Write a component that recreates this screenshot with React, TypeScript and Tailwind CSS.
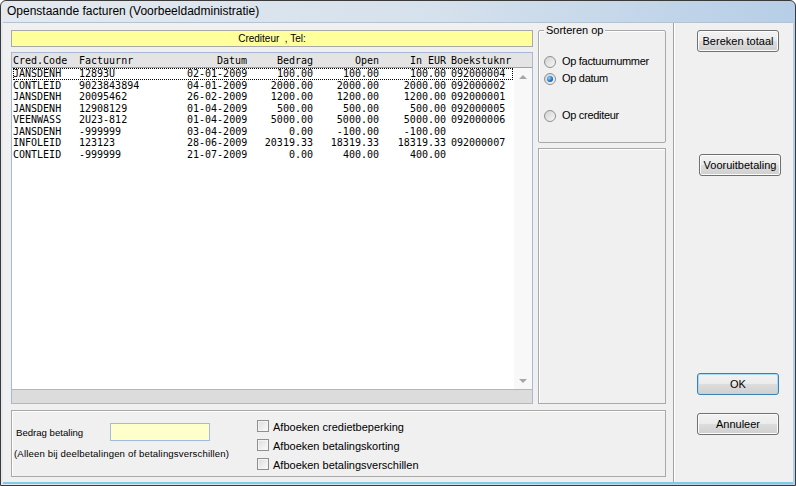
import React from "react";

const rows = [
  ["JANSDENH", "12893U", "02-01-2009", "100.00", "100.00", "100.00", "092000004"],
  ["CONTLEID", "9023843894", "04-01-2009", "2000.00", "2000.00", "2000.00", "092000002"],
  ["JANSDENH", "20095462", "26-02-2009", "1200.00", "1200.00", "1200.00", "092000001"],
  ["JANSDENH", "12908129", "01-04-2009", "500.00", "500.00", "500.00", "092000005"],
  ["VEENWASS", "2U23-812", "01-04-2009", "5000.00", "5000.00", "5000.00", "092000006"],
  ["JANSDENH", "-999999", "03-04-2009", "0.00", "-100.00", "-100.00", ""],
  ["INFOLEID", "123123", "28-06-2009", "20319.33", "18319.33", "18319.33", "092000007"],
  ["CONTLEID", "-999999", "21-07-2009", "0.00", "400.00", "400.00", ""],
];

const headers = ["Cred.Code", "Factuurnr", "Datum", "Bedrag", "Open", "In EUR", "Boekstuknr"];

const cols = "grid grid-cols-[66px_108px_60px_66px_66px_67px_65px]";
const align = ["", "", "text-right", "text-right", "text-right", "text-right", "pl-[5px]"];

const Button = ({ label, focused = false, className = "" }: { label: string; focused?: boolean; className?: string }) => (
  <div
    className={`flex h-[22px] w-[82px] items-center justify-center rounded-[3px] border text-[11px] leading-[13px] text-black bg-[linear-gradient(to_bottom,#f2f2f2_0%,#ebebeb_50%,#dddddd_51%,#cfcfcf_100%)] ${
      focused ? "border-[#3c7fb1] shadow-[inset_0_0_0_1px_#a8dcf6]" : "border-[#707070] shadow-[inset_0_0_0_1px_#fcfcfc]"
    } ${className}`}
  >
    {label}
  </div>
);

const Radio = ({ label, checked = false, className = "" }: { label: string; checked?: boolean; className?: string }) => (
  <div className={`flex h-[13px] items-center ${className}`}>
    <div className="ml-[5px] flex h-[12px] w-[12px] items-center justify-center rounded-full border border-[#8e8f8f] bg-[linear-gradient(135deg,#d2d2d2,#f8f8f8)]">
      {checked && (
        <div className="h-[6px] w-[6px] rounded-full bg-[radial-gradient(circle_at_35%_35%,#8fd2fb,#1a6fc4_60%,#0c3f86)]" />
      )}
    </div>
    <span className="ml-[6px] text-[11px] leading-[13px] tracking-[-0.3px] text-black">{label}</span>
  </div>
);

const Check = ({ label }: { label: string }) => (
  <div className="flex h-[12px] items-center">
    <div className="h-[12px] w-[12px] border border-[#8f8f8f] bg-[linear-gradient(135deg,#dcdcdc,#fbfbfb)] shadow-[inset_0_0_0_1px_#f4f4f4]" />
    <span className="ml-[4px] mt-[2px] text-[11px] leading-[12px] text-black">{label}</span>
  </div>
);

export default function App() {
  return (
    <div className="h-[486px] w-[796px] overflow-hidden bg-white font-['Liberation_Sans',Arial,sans-serif] leading-[13px]">
      <div className="flex h-[486px] w-[796px] flex-col rounded-t-[6px] border border-[#3a3a3a] bg-[linear-gradient(to_right,#e3e9ef,#d5e1ec_55%,#b6cee7)]">
        {/* title bar */}
        <div className="flex h-[21px] items-center pl-[6px] text-[12px] text-black">
          Openstaande facturen (Voorbeeldadministratie)
        </div>

        {/* client */}
        <div className="flex flex-1 flex-col px-[2px] pb-[1px]">
          <div className="flex flex-1 border-t border-[#b4c2d2] border-b-2 border-b-[#7fcbe6] bg-[#f0f0f0]">
            {/* left part */}
            <div className="flex w-[663px] flex-col pl-[8px] pt-[7px]">
              <div className="flex h-[374px]">
                {/* list column */}
                <div className="flex w-[522px] flex-col">
                  <div className="flex h-[17px] items-center justify-center border border-[#a8a8a8] bg-[#ffff9c] text-[10px] text-black">
                    Crediteur&nbsp;&nbsp;, Tel:
                  </div>
                  <div className="mt-[5px] flex h-[352px] flex-col border border-[#a7b7d4] bg-white font-['DejaVu_Sans_Mono',monospace] text-[10px] text-black">
                    <div className={`${cols} h-[15px] items-center border-b border-[#a0a0a0] bg-[#e4e4e4] pl-[1px]`}>
                      {headers.map((h, i) => (
                        <div key={h} className={align[i]}>
                          {h}
                        </div>
                      ))}
                    </div>
                    <div className="flex flex-1">
                      <div className="flex-1 pl-[1px] pr-[1px]">
                        {rows.map((r, ri) => (
                          <div
                            key={ri}
                            className={`${cols} h-[11.5px] items-center leading-[11.5px] ${
                              ri === 0 ? "outline-1 -outline-offset-1 outline-dotted outline-black" : ""
                            }`}
                          >
                            {r.map((c, ci) => (
                              <div key={ci} className={`${align[ci]} whitespace-pre`}>
                                {c}
                              </div>
                            ))}
                          </div>
                        ))}
                      </div>
                      <div className="flex w-[18px] flex-col items-center justify-between bg-[#f8f8f8]">
                        <div className="flex h-[17px] items-center">
                          <div className="h-0 w-0 border-x-[4px] border-b-[4px] border-x-transparent border-b-[#a6a6a6]" />
                        </div>
                        <div className="flex h-[17px] items-center">
                          <div className="h-0 w-0 border-x-[4px] border-t-[4px] border-x-transparent border-t-[#a6a6a6]" />
                        </div>
                      </div>
                    </div>
                    <div className="h-[14px] border-t border-[#a7b7d4] bg-[#dcdcdc]" />
                  </div>
                </div>

                {/* sort column */}
                <div className="ml-[5px] flex w-[128px] flex-col">
                  <div className="relative h-[113px] rounded-[2px] border border-[#a9a9a9] shadow-[inset_1px_1px_0_#fff]">
                    <div className="absolute -top-[8px] left-[5px] bg-[#f0f0f0] px-[2px] text-[11px] leading-[14px] text-black">
                      Sorteren op
                    </div>
                    <Radio label="Op factuurnummer" className="mt-[24px]" />
                    <Radio label="Op datum" checked className="mt-[4px]" />
                    <Radio label="Op crediteur" className="mt-[24px]" />
                  </div>
                  <div className="mt-[5px] flex-1 border border-[#a9a9a9] shadow-[inset_1px_1px_0_#fff]" />
                </div>
              </div>

              {/* bottom panel */}
              <div className="mt-[6px] flex h-[67px] w-[655px] border border-[#a9a9a9] shadow-[inset_1px_1px_0_#fff]">
                <div className="w-[245px] pl-[2px] pt-[12px] text-[9.6px] text-black">
                  <div className="flex items-center">
                    <div className="w-[96px] pl-[2px]">Bedrag betaling</div>
                    <div className="h-[18px] w-[100px] border border-[#a3b9e0] bg-[#ffffcc]" />
                  </div>
                  <div className="mt-[6px] tracking-[0.15px]">(Alleen bij deelbetalingen of betalingsverschillen)</div>
                </div>
                <div className="flex flex-col gap-[7px] pt-[9px]">
                  <Check label="Afboeken credietbeperking" />
                  <Check label="Afboeken betalingskorting" />
                  <Check label="Afboeken betalingsverschillen" />
                </div>
              </div>
            </div>

            {/* separator */}
            <div className="ml-[7px] w-[2px] border-l border-r border-l-[#a0a0a0] border-r-white" />

            {/* buttons */}
            <div className="flex flex-col pl-[22px] pt-[7px]">
              <Button label="Bereken totaal" />
              <Button label="Vooruitbetaling" className="ml-[2px] mt-[102px]" />
              <Button label="OK" focused className="mt-[197px]" />
              <Button label="Annuleer" className="mt-[18px]" />
            </div>
          </div>
        </div>
      </div>
    </div>
  );
}
